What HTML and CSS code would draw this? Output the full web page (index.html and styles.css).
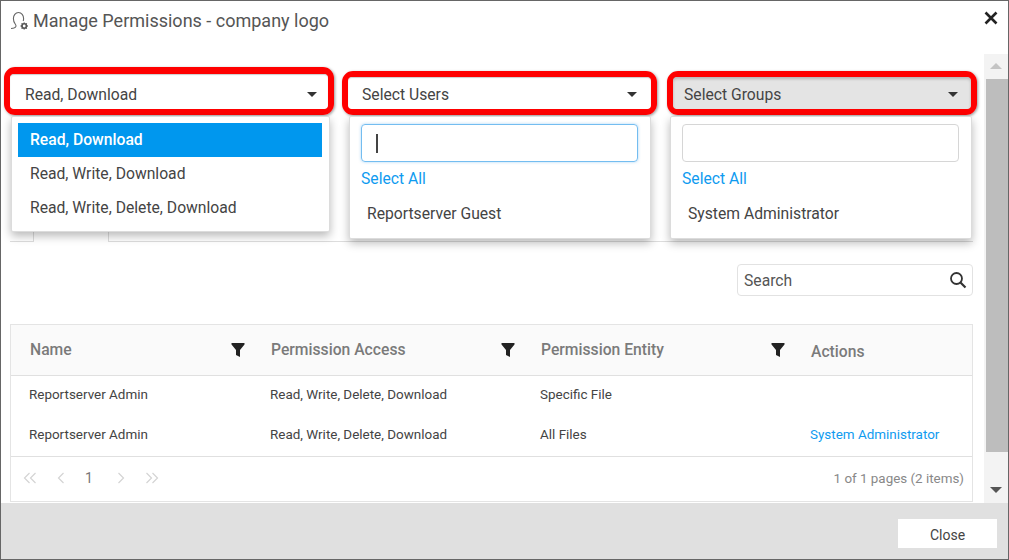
FILE: index.html
```html
<!DOCTYPE html>
<html lang="en">
<head>
  <meta charset="UTF-8">
  <title>Manage Permissions</title>
  <link rel="stylesheet" href="styles.css">
</head>
<body>
  <div class="dialog">
    <div class="dialog-head">
      <svg class="head-icon" width="20" height="20" viewBox="0 0 20 20" fill="none" stroke="#666" stroke-width="1.1">
        <path d="M1 17.500c2.500 0 4.500-.6 5-2.300.2-.8-.2-1.400-.8-2.200C4.200 11.700 3.400 9.500 3.400 7.500c0-3.200 2-6 5.100-6s5.100 2.800 5.100 6c0 .9-.1 1.700-.4 2.500"/>
        <circle cx="14.200" cy="15" r="2.200" stroke-width="1.6" stroke="#555"/>
        <path d="M14.200 11.400v1.400M14.200 17.200v1.400M10.600 15H12M16.400 15h1.400M11.600 12.400l1 1M15.800 16.600l1 1M16.800 12.400l-1 1M12.600 16.600l-1 1" stroke-width="1.3" stroke="#555"/>
      </svg>
      <span class="head-title">Manage Permissions - company logo</span>
      <svg class="head-close" width="14" height="14" viewBox="0 0 14 14" stroke="#222" stroke-width="2.6" fill="none">
        <path d="M1.500 1.500l11 11M12.500 1.500l-11 11"/>
      </svg>
    </div>

    <div class="dialog-body">
      <div class="content">
        <div class="pickers">
          <div class="picker picker-access">
            <div class="select"><span>Read, Download</span><i class="caret"></i></div>
            <div class="drop drop-access">
              <div class="opt opt-active">Read, Download</div>
              <div class="opt">Read, Write, Download</div>
              <div class="opt">Read, Write, Delete, Download</div>
            </div>
          </div>
          <div class="picker picker-users">
            <div class="select"><span>Select Users</span><i class="caret"></i></div>
            <div class="drop drop-list">
              <div class="drop-input drop-input-focus"><i class="text-cursor"></i></div>
              <a class="select-all">Select All</a>
              <div class="drop-item">Reportserver Guest</div>
            </div>
          </div>
          <div class="picker picker-groups">
            <div class="select select-open"><span>Select Groups</span><i class="caret"></i></div>
            <div class="drop drop-list">
              <div class="drop-input"></div>
              <a class="select-all">Select All</a>
              <div class="drop-item">System Administrator</div>
            </div>
          </div>
        </div>

        <div class="tabs"><div class="tab"></div></div>

        <div class="search-row">
          <div class="search">
            <span>Search</span>
            <svg width="18" height="18" viewBox="0 0 18 18" fill="none" stroke="#333" stroke-width="1.8">
              <circle cx="7.500" cy="7.500" r="5.500"/>
              <path d="M11.500 11.500l5 5" stroke-width="2.2"/>
            </svg>
          </div>
        </div>

        <div class="grid">
          <div class="grid-row grid-head">
            <div class="th"><span>Name</span><svg class="filter" width="14" height="14" viewBox="0 0 14 14"><path d="M0.500 0h13v1.500L9 7v7L5 12V7L0.500 1.500z" fill="#222"/></svg></div>
            <div class="th"><span>Permission Access</span><svg class="filter" width="14" height="14" viewBox="0 0 14 14"><path d="M0.500 0h13v1.500L9 7v7L5 12V7L0.500 1.500z" fill="#222"/></svg></div>
            <div class="th"><span>Permission Entity</span><svg class="filter" width="14" height="14" viewBox="0 0 14 14"><path d="M0.500 0h13v1.500L9 7v7L5 12V7L0.500 1.500z" fill="#222"/></svg></div>
            <div class="th th-actions"><span>Actions</span></div>
          </div>
          <div class="grid-row">
            <div class="td">Reportserver Admin</div>
            <div class="td">Read, Write, Delete, Download</div>
            <div class="td">Specific File</div>
            <div class="td"></div>
          </div>
          <div class="grid-row">
            <div class="td">Reportserver Admin</div>
            <div class="td">Read, Write, Delete, Download</div>
            <div class="td">All Files</div>
            <div class="td"><a class="link">System Administrator</a></div>
          </div>
          <div class="pager">
            <svg class="pager-nav" width="14" height="12" viewBox="0 0 14 12"><path d="M6.500 1L1.500 6l5 5M12.500 1l-5 5 5 5"/></svg>
            <svg class="pager-nav pager-prev" width="8" height="12" viewBox="0 0 8 12"><path d="M6.500 1L1.500 6l5 5"/></svg>
            <span class="pager-num">1</span>
            <svg class="pager-nav pager-next" width="8" height="12" viewBox="0 0 8 12"><path d="M1.500 1l5 5-5 5"/></svg>
            <svg class="pager-nav pager-last" width="14" height="12" viewBox="0 0 14 12"><path d="M1.500 1l5 5-5 5M7.500 1l5 5-5 5"/></svg>
            <span class="pager-info">1 of 1 pages (2 items)</span>
          </div>
        </div>
      </div>

      <div class="scrollbar">
        <i class="arrow-up"></i>
        <div class="thumb"></div>
        <i class="arrow-down"></i>
      </div>
    </div>

    <div class="dialog-foot">
      <button type="button" class="close-btn">Close</button>
    </div>
  </div>
</body>
</html>
```

FILE: styles.css
```css
* {
  box-sizing: border-box;
}
html, body {
  margin: 0;
  padding: 0;
  height: 100%;
  overflow: hidden;
}
body {
  font-family: Roboto, "Liberation Sans", sans-serif;
  color: #444;
  background: #fff;
}
.dialog {
  width: 1009px;
  height: 560px;
  border: 1px solid #666;
  display: flex;
  flex-direction: column;
}

/* header */
.dialog-head {
  height: 53px;
  flex: none;
  display: flex;
  align-items: flex-start;
  padding: 10px 10px 0 9px;
}
.head-icon {
  flex: none;
}
.head-title {
  margin-left: 3px;
  font-size: 18px;
  line-height: 20px;
  color: #555;
}
.head-close {
  margin-left: auto;
}

/* body + scrollbar */
.dialog-body {
  flex: 1;
  display: flex;
  min-height: 0;
}
.content {
  width: 983px;
  flex: none;
}
.scrollbar {
  width: 24px;
  flex: none;
  background: #f3f3f3;
  padding-left: 2px;
  position: relative;
}
.thumb {
  margin-top: 25px;
  height: 373px;
  background: #bdbdbd;
}
.arrow-up, .arrow-down {
  position: absolute;
  left: 6px;
  width: 0;
  height: 0;
  border-left: 6px solid transparent;
  border-right: 6px solid transparent;
}
.arrow-up {
  top: 9px;
  border-bottom: 6px solid #c4c4c4;
}
.arrow-down {
  top: 433px;
  border-top: 6px solid #555;
}

/* the three selects, ringed in red */
.pickers {
  display: flex;
  align-items: flex-end;
  height: 61px;
  padding-left: 3px;
}
.picker {
  position: relative;
  height: 44px;
  border: 6px solid #f00;
  border-radius: 11px;
  box-shadow: 1px 1px 3px rgba(0, 0, 0, 0.4);
}
.picker-access {
  width: 330px;
  height: 48px;
  border-top-width: 7px;
}
.picker-users {
  width: 315px;
  margin-left: 8px;
}
.picker-groups {
  width: 310px;
  margin-left: 10px;
}
.select {
  height: 100%;
  display: flex;
  align-items: center;
  justify-content: space-between;
  font-size: 15.7px;
  border-radius: 4px;
  background: #fff;
  box-shadow: inset 0 1px 1px rgba(0, 0, 0, 0.2);
}
.picker-access .select {
  padding: 5px 11px 0 15px;
}
.picker-users .select {
  padding: 3px 14px 0 14px;
}
.picker-groups .select {
  padding: 3px 13px 0 11px;
}
.select-open {
  background: #e4e4e4;
  box-shadow: inset 0 2px 3px rgba(0, 0, 0, 0.2);
}
.caret {
  width: 0;
  height: 0;
  border-left: 5px solid transparent;
  border-right: 5px solid transparent;
  border-top: 5px solid #333;
}

/* dropdown panels */
.drop {
  position: absolute;
  top: 39px;
  background: #fff;
  border: 1px solid #dcdcdc;
  border-radius: 2px;
  box-shadow: 0 4px 10px rgba(0, 0, 0, 0.28);
  z-index: 2;
  font-size: 15.7px;
}
.drop-access {
  top: 42px;
  left: 1px;
  width: 319px;
  height: 116px;
  padding: 6px 7px 6px 6px;
}
.opt {
  height: 33.5px;
  line-height: 33px;
  padding-left: 12px;
}
.opt-active {
  height: 34px;
  background: #0097ee;
  color: #fff;
  font-weight: 500;
}
.drop-list {
  width: 302px;
  height: 123px;
  padding: 7px 12px 0 11px;
}
.picker-users .drop-list {
  left: 1px;
}
.picker-groups .drop-list {
  left: -3px;
}
.drop-input {
  height: 38px;
  border: 1px solid #d6d6d6;
  border-radius: 4px;
  display: flex;
  align-items: center;
  padding-left: 14px;
}
.drop-input-focus {
  border-color: #74bdf0;
  box-shadow: 0 0 3px rgba(80, 170, 240, 0.5);
}
.text-cursor {
  width: 2px;
  height: 19px;
  background: #444;
}
.select-all {
  display: block;
  margin-top: 7px;
  line-height: 20px;
  color: #0f9bf0;
}
.drop-item {
  margin-top: 15px;
  padding-left: 6px;
  line-height: 20px;
}

/* tab strip hidden behind the dropdowns */
.tabs {
  height: 11px;
  margin: 116px 11px 0 9px;
  border-bottom: 1px solid #ddd;
}
.tab {
  width: 76px;
  height: 11px;
  margin-left: 23px;
  background: #fff;
  border: 1px solid #ddd;
  border-top: 0;
  border-bottom: 0;
}

/* search */
.search-row {
  display: flex;
  justify-content: flex-end;
  padding: 22px 11px 0 0;
}
.search {
  width: 236px;
  height: 32px;
  border: 1px solid #e2e2e2;
  border-radius: 4px;
  display: flex;
  align-items: center;
  justify-content: space-between;
  padding: 0 5px 0 6px;
  font-size: 15.7px;
  color: #555;
}

/* table */
.grid {
  margin: 28px 11px 0 9px;
  height: 178px;
  border: 1px solid #e4e4e4;
  font-size: 13.45px;
}
.grid-row {
  display: grid;
  grid-template-columns: 241px 270px 270px 1fr;
  height: 40px;
}
.grid-head {
  height: 51px;
  background: #fafafa;
  border-bottom: 1px solid #e0e0e0;
}
.th {
  display: flex;
  align-items: center;
  justify-content: space-between;
  padding: 0 7px 1px 19px;
  font-size: 15.7px;
  font-weight: 500;
  color: #7a7a7a;
}
.th-actions {
  padding-top: 4px;
}
.td {
  padding-left: 18px;
  line-height: 37px;
  color: #444;
}
.link {
  color: #0f9bf0;
}
.pager {
  height: 45px;
  border-top: 1px solid #e0e0e0;
  display: flex;
  align-items: center;
  padding: 0 8px 2px 12px;
}
.pager-nav {
  fill: none;
  stroke: #d4d4d4;
  stroke-width: 1.2;
  flex: none;
}
.pager-prev {
  margin-left: 20px;
}
.pager-num {
  margin-left: 20px;
  font-size: 14px;
  color: #777;
}
.pager-next {
  margin-left: 24px;
}
.pager-last {
  margin-left: 20px;
}
.pager-info {
  margin-left: auto;
  color: #888;
  font-size: 13.4px;
}

/* footer */
.dialog-foot {
  height: 56px;
  flex: none;
  background: #e0e0e0;
  display: flex;
  justify-content: flex-end;
  padding: 16px 11px 0 0;
}
.close-btn {
  width: 99px;
  height: 29px;
  border: 0;
  padding: 2px 0 0;
  background: #fff;
  font-family: inherit;
  font-size: 14px;
  color: #444;
}
```
